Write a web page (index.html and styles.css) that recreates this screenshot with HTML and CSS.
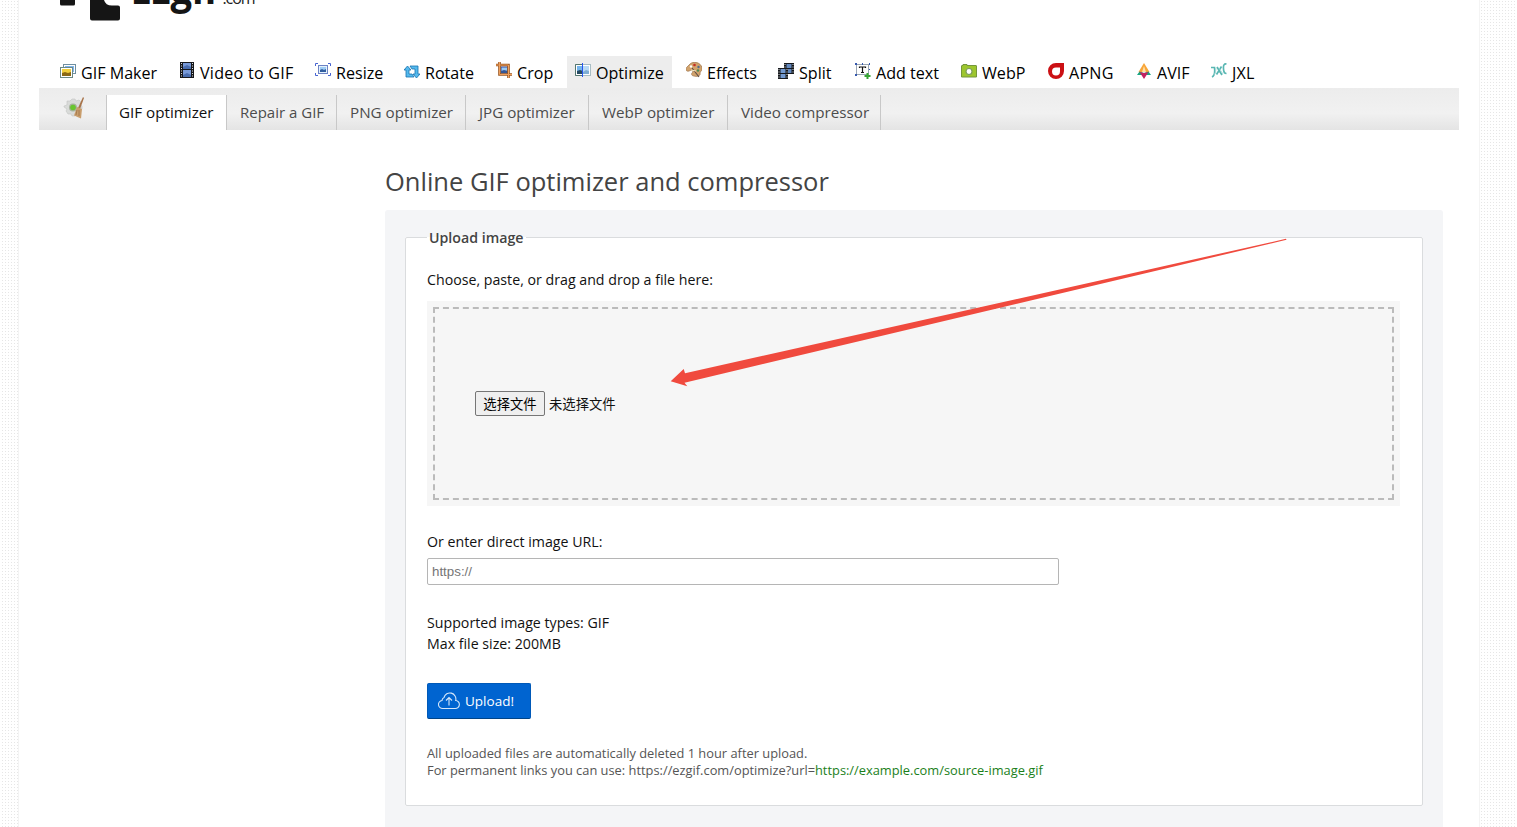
FILE: index.html
```html
<!DOCTYPE html>
<html lang="en">
<head>
  <meta charset="UTF-8" />
  <meta name="viewport" content="width=device-width, initial-scale=1.0" />
  <title>Online GIF optimizer and compressor</title>
  <link rel="stylesheet" href="styles.css">
</head>
<body>
  <div class="wrapper">
    <header class="header">
      <svg class="logo" width="220" height="24" viewBox="0 0 220 24">
        <path d="M1 0h15v4q0 1.500-1.500 1.500h-12q-1.500 0-1.500-1.500z" fill="#151515"/>
        <path d="M31 0h14q1.500 5.500 8 5.500h6q2 0 2 2v11q0 2-2 2h-26q-2 0-2-2z" fill="#151515"/>
        <text x="71.500" y="4" class="logo-name" textLength="88" lengthAdjust="spacingAndGlyphs">Ezgif</text>
        <text x="163.500" y="4" class="logo-com" textLength="33">.com</text>
      </svg>
    </header>

    <nav class="menu">
      <a class="item"><svg class="icon" viewBox="0 0 16 16"><rect x="3.500" y="1.500" width="12" height="9" fill="#fff" stroke="#6f8fa0"/><path d="M5 3h9v6H5z" fill="#7db4ee"/><rect x=".5" y="4.500" width="12" height="10" fill="#fff" stroke="#6d8985"/><path d="M2 6h9v7H2z" fill="#f2cf3c"/><path d="M2 10l3-1 3 1 3-1v4H2z" fill="#8b6814"/></svg><span>GIF Maker</span></a>
      <a class="item wide"><svg class="icon up" viewBox="0 0 16 16"><path d="M1 0h14v16H1z" fill="#15171b"/><path d="M4 1h8v6H4zM4 8h8v7H4z" fill="#7799d8"/><path d="M4 5l4-2 4 2v2H4zM4 13l4-2 4 2v2H4z" fill="#486cae"/><path d="M2.500 1v15M13.500 1v15" stroke="#ddd" stroke-dasharray="1 1.500"/></svg><span>Video to GIF</span></a>
      <a class="item"><svg class="icon up" viewBox="0 0 16 16"><path d="M.5 4V1.500H3M13 1.500h2.500V4M.5 11v2.500H3M13 13.500h2.500V11" fill="none" stroke="#4663d2"/><rect x="3.500" y="3.500" width="9" height="8" fill="#e4f2fc" stroke="#6d83c4"/><path d="M5 5h6v3H5z" fill="#9fcdf5"/><path d="M5 8l2-1 2 1 2-1v3H5z" fill="#315e9e"/></svg><span>Resize</span></a>
      <a class="item"><svg class="icon" viewBox="0 0 16 16"><path d="M6 3h8v8h2l-3.500 4L9 11h2V6H8zM10 14H2V7H0l3.500-4L7 7H5v4h3z" fill="#54b9ed" stroke="#1671ae" stroke-width=".8"/></svg><span>Rotate</span></a>
      <a class="item"><svg class="icon up" viewBox="0 0 16 16"><rect x="5" y="5" width="7" height="6" fill="#9acaf4" stroke="#334fa8"/><path d="M5 9l3-1 4 1v2H5z" fill="#345696"/><path d="M3.500 0v12.500H16M0 3h12.500v13" fill="none" stroke="#9a551e" stroke-width="2.600"/><path d="M3.500 0v12.500H16M0 3h12.500v13" fill="none" stroke="#efa05e"/></svg><span>Crop</span></a>
      <a class="item active"><svg class="icon up" viewBox="0 0 16 16"><rect x=".5" y="2.500" width="15" height="11" fill="#fff" stroke="#a8bdc4"/><path d="M2 4h6v8H2z" fill="#74b4ed"/><path d="M8 4h6v8H8z" fill="#b9daf5"/><path d="M2 9l3-1 3 1v3H2z" fill="#264a61"/><path d="M8 10l3-2 3 1v3H8z" fill="#7faed4"/><path d="M.5 2.500v11H7M.5 2.500H7" fill="none" stroke="#55766f"/><path d="M7.500 1v14" stroke="#2754ee"/></svg><span>Optimize</span></a>
      <a class="item"><svg class="icon up" viewBox="0 0 16 16"><path d="M4 2c3-3 11-2 12 4 1 3-2 3-2 5 1 3-3 4-6 3-3 0-3-3-1-4 0-2-2-2-4-1C0 10-1 7 1 5z" fill="#d2a36c" stroke="#9c744d" stroke-width=".7"/><circle cx="5" cy="4.500" r="1.200" fill="#fff"/><circle cx="8.500" cy="3" r="1.300" fill="#c52d26"/><circle cx="12.500" cy="5" r="1.200" fill="#516c91"/><circle cx="12" cy="8.500" r="1.200" fill="#4b8b54"/><path d="M6 6l7 9" stroke="#5b4a43" stroke-width="1.100"/><path d="M5 8l5 1" stroke="#f6e7c3"/></svg><span>Effects</span></a>
      <a class="item"><svg class="icon" viewBox="0 0 16 16"><path d="M6 0h10v11H6z" fill="#15181d"/><path d="M8.500 1h5v4h-5zM8.500 6h5v4h-5z" fill="#6388be"/><path d="M7 1v10M15 1v10" stroke="#ddd" stroke-dasharray="1 1.500"/><path d="M0 5h10v11H0z" fill="#15181d"/><path d="M2.500 6h5v4h-5zM2.500 11h5v4h-5z" fill="#7198cf"/><path d="M1 6v10M9 6v10" stroke="#ddd" stroke-dasharray="1 1.500"/></svg><span>Split</span></a>
      <a class="item"><svg class="icon" viewBox="0 0 16 16"><rect x="1.500" y="1.500" width="12" height="10" fill="#fff" stroke="#9aa6b3"/><path d="M0 0h2v2H0zM7 0h1v2H7zM14 0h1v2h-1zM0 11h2v2H0zM14 6h1v1h-1z" fill="#3658ae"/><path d="M4.500 5V4h6v1M7.500 4v5.500M6 9.500h3" fill="none" stroke="#111" stroke-width="1.200"/><path d="M12.500 10v6M9.500 13h6" stroke="#37a634" stroke-width="2"/></svg><span>Add text</span></a>
      <a class="item"><svg class="icon" viewBox="0 0 16 16"><path d="M1 2.500h1v-1h4v1h9q.5 0 .5.500v11H.5V3q0-.5.5-.5z" fill="#9dc62e" stroke="#75963c"/><circle cx="8" cy="8.500" r="3" fill="#fff" stroke="#7c9c5c" stroke-width="1.200"/></svg><span>WebP</span></a>
      <a class="item wide"><svg class="icon" viewBox="0 0 16 16"><path d="M8 0h8v8a8 8 0 1 1-8-8zm0 4.500a4 4 0 1 0 4 4v-4z" fill="#cb1014" fill-rule="evenodd"/></svg><span>APNG</span></a>
      <a class="item"><svg class="icon" viewBox="0 0 16 16"><path d="M8 0l5.500 9h-11z" fill="#f8a537"/><path d="M8 3l2 6H6z" fill="#ffe0a6"/><path d="M3.500 8.500L1 12h14l-2.500-3.500L8 10z" fill="#18a681"/><path d="M3.500 9L8 16l4.500-7-4.500 1z" fill="#c22260"/></svg><span>AVIF</span></a>
      <a class="item wide"><svg class="icon" viewBox="0 0 16 16"><path d="M0 4.500h3.500q1 8-2.500 9.500M6 4l5 8M10.500 3.500l-5 8M15.500 1q-3.500-.5-3 4.500 0 5 3 5" fill="none" stroke="#58b6b2" stroke-width="1.700"/><path d="M5 5q0 5-2 7M8 5l4 6" fill="none" stroke="#a0d9d5" stroke-width=".8"/></svg><span>JXL</span></a>
    </nav>

    <nav class="submenu">
      <a class="tab brush"><svg width="24" height="24" viewBox="0 0 24 24"><path d="M9 2l3 0 1 2 3-1 2 2-1 2 2 2v3l-2 2 0 3-3 0-2 2H9l-1-2-3 0-2-3 1-2-3-2V9l3-1 0-4 3 0z" fill="#d9dbd9" stroke="#c2c4c2" stroke-width=".6"/><circle cx="10" cy="10.500" r="4" fill="#a4b29b"/><circle cx="10" cy="10.500" r="2.800" fill="#68c52e"/><path d="M20 0l1 1-4 11-2-1z" fill="#a8744a"/><path d="M14 10l5 2-1 9.500-7-3z" fill="#c89d6c"/><path d="M14 13l-1 5M16 13v6" stroke="#9d7247" stroke-width=".8"/></svg></a>
      <a class="tab current"><span>GIF optimizer</span></a>
      <a class="tab first"><span>Repair a GIF</span></a>
      <a class="tab"><span>PNG optimizer</span></a>
      <a class="tab"><span>JPG optimizer</span></a>
      <a class="tab"><span>WebP optimizer</span></a>
      <a class="tab"><span>Video compressor</span></a>
    </nav>

    <main class="content">
      <h1>Online GIF optimizer and compressor</h1>
      <form class="form">
        <fieldset>
          <legend>Upload image</legend>
          <p class="label choose">Choose, paste, or drag and drop a file here:</p>
          <div class="drop">
            <div class="drop-inner">
              <button type="button" class="file-btn">选择文件</button>
              <span class="file-name">未选择文件</span>
            </div>
          </div>
          <p class="label url-label">Or enter direct image URL:</p>
          <input type="text" class="url" placeholder="https://">
          <p class="label types">Supported image types: GIF</p>
          <p class="label size">Max file size: 200MB</p>
          <button type="button" class="upload">
            <svg width="22" height="18" viewBox="0 0 22 18"><path d="M5 16.500h12a4 4 0 0 0 .7-8A5.500 5.500 0 0 0 6 5.500a3.500 3.500 0 0 0-2 3A4 4 0 0 0 5 16.500zM11 13.500V6M8 8.500L11 5.500l3 3" fill="none" stroke="#d5e7fa" stroke-width="1.100"/></svg>
            <span>Upload!</span>
          </button>
          <p class="note note-deleted">All uploaded files are automatically deleted 1 hour after upload.</p>
          <p class="note note-link">For permanent links you can use: https://ezgif.com/optimize?url=<span class="green">https://example.com/source-image.gif</span></p>
        </fieldset>
      </form>
    </main>
  </div>

  <svg class="arrow" width="620" height="150" viewBox="0 0 620 150">
    <path d="M.7 143.300L13.700 131 15 135.300 616 .8l.5 1L14.500 144.700l2.800 3.600z" fill="#f04a3e"/>
  </svg>
</body>
</html>
```
FILE: styles.css
```css
body {
  margin: 0;
  height: 827px;
  overflow: hidden;
  position: relative;
  font-family: "Open Sans", "Noto Sans CJK SC", sans-serif;
  color: #111;
  background-color: #fff;
  background-image: radial-gradient(circle at 1.5px 1.5px, #e6e6e6 0.6px, transparent 0.9px);
  background-size: 3px 3px;
  background-position: 1px 0;
}

.wrapper {
  box-sizing: border-box;
  width: 1462px;
  height: 827px;
  margin-left: 18px;
  padding: 0 20px;
  background: #fff;
  border: 1px solid #f4f4f4;
  border-width: 0 1px;
  overflow: hidden;
}

/* header */
.header {
  height: 56px;
  padding-left: 20px;
}
.logo {
  display: block;
}
.logo-name {
  font-size: 43px;
  font-weight: 700;
  fill: #151515;
}
.logo-com {
  font-size: 16px;
  font-weight: 400;
  fill: #222;
}

/* main menu */
.menu {
  display: grid;
  grid-template-columns: 119px 136px 89px 92px 79px 111px 92px 77px 106px 87px 88px 75px 70px;
  height: 32px;
  padding-left: 13px;
}
.item {
  display: flex;
  align-items: flex-start;
  justify-self: start;
  height: 32px;
  padding: 0 8px;
  gap: 5px;
  box-sizing: border-box;
  font-size: 16.1px;
  line-height: 34px;
  color: #000;
  white-space: nowrap;
}
.item.wide {
  letter-spacing: 0.25px;
}
.item.active {
  width: 105px;
  background: #ededed;
}
.icon {
  flex: none;
  width: 16px;
  height: 16px;
  margin-top: 7px;
}
.icon.up {
  margin-top: 6px;
}

/* submenu */
.submenu {
  display: grid;
  grid-template-columns: 68px 120px 110px 129px 123px 139px 153px;
  align-items: end;
  width: 1420px;
  height: 42px;
  background: linear-gradient(#ececec, #f1f1f1 60%, #e4e4e4);
}
.tab {
  box-sizing: border-box;
  height: 35px;
  padding-left: 13px;
  border-right: 1px solid #c8c8c8;
  font-size: 15.2px;
  line-height: 35px;
  color: #4c4c4c;
  white-space: nowrap;
}
.tab.first {
  font-size: 15px;
}
.tab.current {
  padding-left: 12px;
  background: #fff;
  color: #111;
}
.tab.brush {
  padding: 2px 0 0 24px;
  line-height: 0;
}

/* content */
.content {
  width: 1058px;
  margin-left: 346px;
}
h1 {
  height: 80px;
  margin: 0;
  font-size: 25.5px;
  font-weight: 400;
  line-height: 102px;
  color: #444;
  white-space: nowrap;
}
.form {
  height: 640px;
  padding: 17px 20px 0;
  box-sizing: border-box;
  background: #f4f5f7;
  border-radius: 3px;
}
fieldset {
  box-sizing: border-box;
  height: 579px;
  margin: 0;
  padding: 0 22px 0 21px;
  border: 1px solid #dadcde;
  border-radius: 2px;
  background: #fff;
}
legend {
  height: 20px;
  padding: 0 2px;
  font-size: 14.2px;
  font-weight: 600;
  line-height: 22px;
  color: #444;
}
p {
  margin: 0;
  white-space: nowrap;
}
.label {
  height: 21px;
  font-size: 14.2px;
  line-height: 21px;
}
.choose {
  margin-top: 22px;
}
.drop {
  box-sizing: border-box;
  width: 973px;
  height: 205px;
  margin-top: 11px;
  padding: 6px;
  background: #f6f6f6;
}
.drop-inner {
  box-sizing: border-box;
  display: flex;
  align-items: center;
  width: 961px;
  height: 193px;
  padding-left: 40px;
  border: 2px dashed #bbb;
}
.file-btn {
  width: 70px;
  height: 25px;
  padding: 0;
  border: 1px solid #767676;
  border-radius: 2px;
  background: #efefef;
  font: 13.333px/22px "Noto Sans CJK SC", sans-serif;
  color: #000;
}
.file-name {
  margin-left: 4px;
  font: 13.333px/22px "Noto Sans CJK SC", sans-serif;
}
.url-label {
  margin-top: 25px;
}
.url {
  display: block;
  box-sizing: border-box;
  width: 632px;
  height: 27px;
  margin: 6px 0 0;
  padding: 0 4px;
  border: 1px solid #b5b5b5;
  border-radius: 2px;
  font: 13.333px "Liberation Sans", sans-serif;
}
.types {
  margin-top: 27px;
}
.upload {
  display: flex;
  align-items: center;
  gap: 5px;
  width: 104px;
  height: 36px;
  margin-top: 29px;
  padding: 0 0 0 10px;
  border: 1px solid #0059b8;
  border-bottom-color: #004488;
  border-radius: 2px;
  background: #0064d0;
  font: 13.5px "Open Sans", sans-serif;
  color: #fff;
}
.note {
  height: 17px;
  font-size: 12.85px;
  line-height: 17px;
  color: #555;
}
.note-deleted {
  margin-top: 26px;
}
.green {
  color: #1b7f1b;
}

/* pointer over the drop area */
.arrow {
  position: absolute;
  left: 670px;
  top: 238px;
}
```
